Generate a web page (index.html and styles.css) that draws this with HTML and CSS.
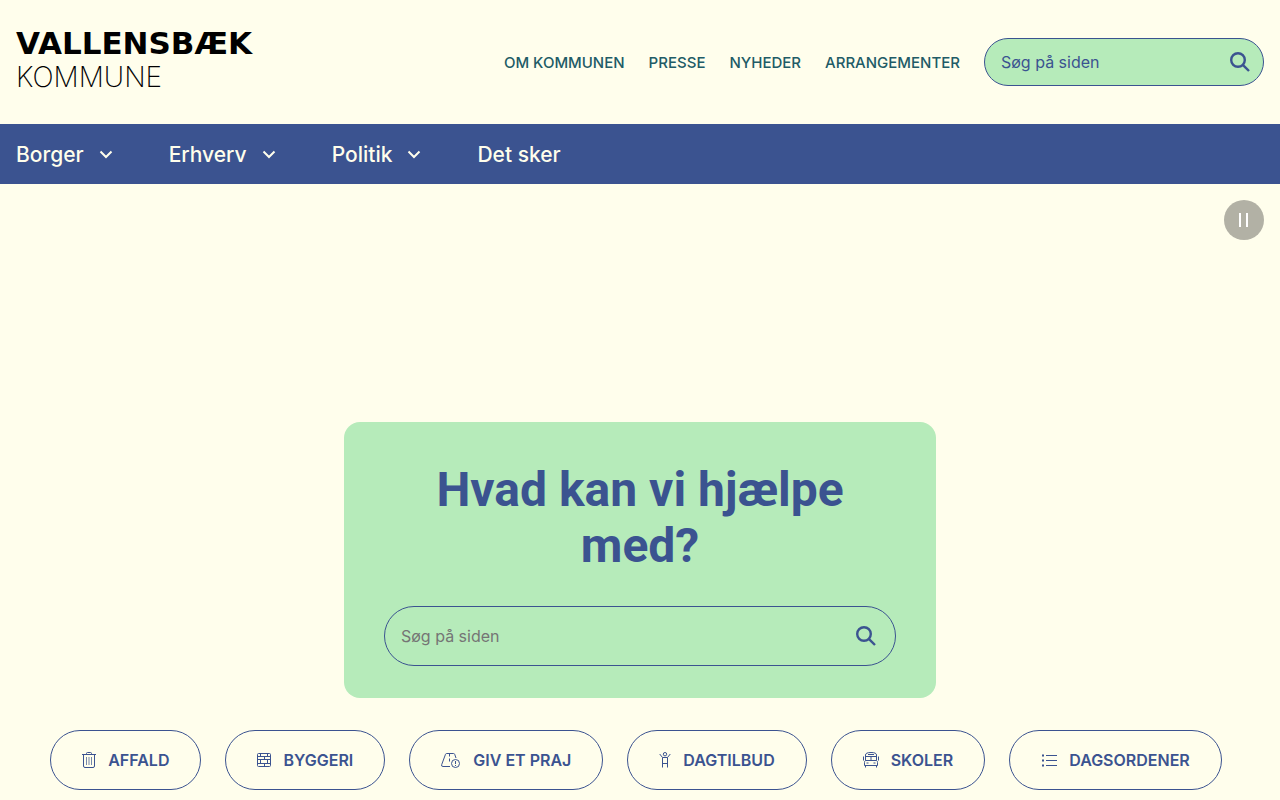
FILE: index.html
```html
<!DOCTYPE html>
<html lang="da">
<head>
    <meta charset="UTF-8">
    <meta name="viewport" content="width=device-width, initial-scale=1.0">
    <title>Vallensbæk Kommune</title>
    <link rel="stylesheet" href="styles.css">
</head>
<body>
    <header class="header">
        <a class="logo" href="#">
            <span class="logo-name">VALLENSBÆK</span>
            <span class="logo-sub">KOMMUNE</span>
        </a>
        <div class="header-right">
            <nav class="top-links" aria-label="Topmenu">
                <a href="#">OM KOMMUNEN</a>
                <a href="#">PRESSE</a>
                <a href="#">NYHEDER</a>
                <a href="#">ARRANGEMENTER</a>
            </nav>
            <form class="search search-small">
                <input type="search" placeholder="Søg på siden" aria-label="Søg på siden">
                <button type="submit" aria-label="Søg">
                    <svg width="20" height="20" viewBox="0 0 20 20"><circle cx="8" cy="8" r="6.8"/><path d="M12.8 12.8l6.2 6.2"/></svg>
                </button>
            </form>
        </div>
    </header>

    <nav class="main-nav" aria-label="Hovedmenu">
        <div class="nav-item">
            <a href="#">Borger</a>
            <button type="button" aria-label="Vis undermenu for Borger"><svg width="14" height="10" viewBox="0 0 14 10"><path d="M1.5 2.5L7 8l5.5-5.5"/></svg></button>
        </div>
        <div class="nav-item">
            <a href="#">Erhverv</a>
            <button type="button" aria-label="Vis undermenu for Erhverv"><svg width="14" height="10" viewBox="0 0 14 10"><path d="M1.5 2.5L7 8l5.5-5.5"/></svg></button>
        </div>
        <div class="nav-item">
            <a href="#">Politik</a>
            <button type="button" aria-label="Vis undermenu for Politik"><svg width="14" height="10" viewBox="0 0 14 10"><path d="M1.5 2.5L7 8l5.5-5.5"/></svg></button>
        </div>
        <div class="nav-item">
            <a href="#">Det sker</a>
        </div>
    </nav>

    <main class="hero">
        <button class="pause" type="button" aria-label="Pause">
            <svg width="10" height="14" viewBox="0 0 10 14"><path d="M0 0h2v14H0zM7 0h2v14H7z"/></svg>
        </button>
        <section class="help-box">
            <h1>Hvad kan vi hjælpe med?</h1>
            <form class="search search-large">
                <input type="search" placeholder="Søg på siden" aria-label="Søg på siden">
                <button type="submit" aria-label="Søg">
                    <svg width="20" height="20" viewBox="0 0 20 20"><circle cx="8" cy="8" r="6.8"/><path d="M12.8 12.8l6.2 6.2"/></svg>
                </button>
            </form>
        </section>
        <div class="shortcuts">
            <a href="#">
                <svg width="14" height="16" viewBox="0 0 14 16"><path d="M0 2.5h14M4.5 2.5v-1a1 1 0 0 1 1-1h3a1 1 0 0 1 1 1v1M1.5 2.5V14A1.5 1.5 0 0 0 3 15.5h8a1.5 1.5 0 0 0 1.5-1.5V2.5"/><path class="bars" d="M4.5 5v8M7 5v8M9.5 5v8"/></svg>
                AFFALD
            </a>
            <a href="#">
                <svg width="14" height="16" viewBox="0 0 14 16"><rect x=".5" y="1.5" width="13" height="13" rx="1"/><path d="M.5 4.5h13M.5 7.5h13M.5 11.5h13M3.5 1.5v3M10.5 1.5v3M7.5 4.5v3M3.5 7.5v4M10.5 7.5v4M7.5 11.5v3"/></svg>
                BYGGERI
            </a>
            <a href="#">
                <svg width="20" height="16" viewBox="0 0 20 16"><path d="M9 14.5H2A1.4 1.4 0 0 1 .7 12.6L4.5 2.3a1.2 1.2 0 0 1 1.1-.8h7a1.2 1.2 0 0 1 1.1.8L15 6M8.5 2v2.5M8.5 6.5v3"/><circle cx="14.5" cy="11.5" r="4"/><path d="M14.5 9v3M14.5 13v1"/></svg>
                GIV ET PRAJ
            </a>
            <a href="#">
                <svg width="12" height="16" viewBox="0 0 12 16"><circle cx="6" cy="2.2" r="1.7"/><path d="M.7 2l2.8 3.5h5L11.3 2M3.5 5.5v10M8.5 5.5v10M3.5 11.5h5"/></svg>
                DAGTILBUD
            </a>
            <a href="#">
                <svg width="16" height="16" viewBox="0 0 16 16"><path d="M2.5 8.5V3Q2.5.5 8 .5T13.5 3v5.5M5 2.5h6M2.5 4.5h11M8 4.5v4M2.5 8.5h11q1 .5 1 2v3h-13v-3q0-1.5 1-2M.5 4.5v4M15.5 4.5v4M2.5 13.5v2M13.5 13.5v2M3.5 11h2M10.5 11h2"/></svg>
                SKOLER
            </a>
            <a href="#">
                <svg width="16" height="16" viewBox="0 0 16 16"><path d="M5 3.5h11M5 8.5h11M5 13.5h11"/><path class="dots" d="M1 2.5h2v2H1zM1 7.5h2v2H1zM1 12.5h2v2H1z"/></svg>
                DAGSORDENER
            </a>
        </div>
    </main>
</body>
</html>
```
FILE: styles.css
```css
* { box-sizing: border-box; }
body { margin: 0; font-family: Inter, "Liberation Sans", sans-serif; font-size: 16px; background-color: #fffeec; color: #3b5390; }
a { text-decoration: none; color: inherit; }
button { border: none; padding: 0; background: none; cursor: pointer; }
svg { display: block; flex: none; fill: none; stroke: currentColor; }

.header { display: flex; justify-content: space-between; align-items: center; min-height: 124px; padding: 0 16px; }
.logo { display: flex; flex-direction: column; padding-bottom: 4px; color: #000; }
.logo-name { font-family: "DejaVu Sans", sans-serif; font-size: 31px; font-weight: 700; line-height: 34px; }
.logo-sub { font-size: 28px; font-weight: 200; line-height: 34px; }
.header-right { display: flex; align-items: center; gap: 24px; }
.top-links { display: flex; gap: 24px; font-size: 15px; font-weight: 500; color: #215b66; }

.search { display: flex; align-items: center; border: 1px solid #3b5390; border-radius: 30px; background-color: #b6ebba; }
.search input { flex: 1; min-width: 0; height: 100%; padding: 0 16px; border: none; border-radius: 30px; background: none; font-family: inherit; font-size: 16px; color: #3b5390; }
.search button { color: #3b5390; }
.search svg { stroke-width: 2.4; }
.search-small { width: 280px; height: 48px; padding-right: 13px; }
.search-small input::placeholder { color: #3b5390; }
.search-large { height: 60px; padding-right: 19px; }
.search-large input::placeholder { color: #757575; }

.main-nav { display: flex; gap: 56px; align-items: center; min-height: 60px; padding: 0 16px; background-color: #3b5390; color: #fffeec; }
.nav-item { display: flex; align-items: center; gap: 15px; font-size: 21px; font-weight: 500; }
.nav-item button { color: inherit; }
.nav-item svg { stroke-width: 2; }

.hero { position: relative; display: flex; flex-direction: column; align-items: center; gap: 32px; padding: 238px 16px 10px; }
.pause { position: absolute; top: 16px; right: 16px; display: flex; align-items: center; justify-content: center; width: 40px; height: 40px; border-radius: 50%; background-color: #b2b1a5; color: #fff; }
.pause svg { fill: currentColor; stroke: none; }
.help-box { width: 100%; max-width: 592px; padding: 40px 40px 32px; border-radius: 16px; background-color: #b6ebba; }
h1 { margin: 0 0 32px; font-family: Roboto, "Liberation Sans", sans-serif; font-size: 48px; line-height: 56px; font-weight: 700; text-align: center; }

.shortcuts { display: flex; flex-wrap: wrap; justify-content: center; gap: 24px; padding-right: 8px; }
.shortcuts a { display: flex; align-items: center; gap: 12px; height: 60px; padding: 0 31px; border: 1px solid #3b5390; border-radius: 30px; font-weight: 600; white-space: nowrap; }
.bars { opacity: .7; }
.dots { fill: currentColor; stroke: none; }
```
